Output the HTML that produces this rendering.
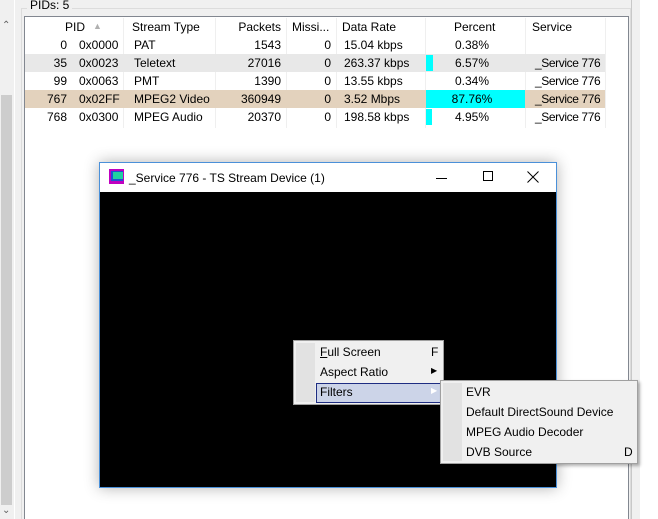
<!DOCTYPE html>
<html><head><style>
*{margin:0;padding:0;box-sizing:border-box}
body{width:658px;height:519px;background:#f0f0f0;font-family:"Liberation Sans",sans-serif;font-size:12px;color:#000;position:relative;overflow:hidden}
.a{position:absolute}
.row{position:absolute;left:25px;height:18px;width:580px}
.c{position:absolute;top:2px;white-space:nowrap}
.r{text-align:right}
.s{letter-spacing:-0.4px}
</style></head><body>
<div class="a" style="left:0;top:0;width:14px;height:519px;background:#f0f0f0"></div>
<div class="a" style="left:1px;top:95px;width:11px;height:410px;background:#cdcdcd"></div>
<div class="a" style="left:2px;top:20px;font-size:10px;color:#606060">&#8963;</div>
<div class="a" style="left:2px;top:505px;font-size:10px;color:#606060">&#8964;</div>
<div class="a" style="left:14px;top:0;width:1px;height:519px;background:#fff"></div>
<div class="a" style="left:21px;top:8px;width:610px;height:511px;border:1px solid #dcdcdc;border-bottom:none"></div>
<div class="a" style="left:27px;top:0;background:#f0f0f0;padding:0 3px;font-size:12px;line-height:11px;color:#000">PIDs: 5</div>
<div class="a" style="left:24px;top:16px;width:605px;height:503px;background:#fff;border:1px solid #828790;border-bottom:none"></div>
<div class="a" style="left:640px;top:0;width:18px;height:519px;background:#fff"></div>
<div class="a" style="left:631px;top:0;width:1px;height:519px;background:#c8c8c8"></div>
<!-- header -->
<div class="row" style="top:18px">
<div class="c" style="left:40px">PID</div><div class="c" style="left:68px;top:3px;color:#b0b0b0;font-size:9px">&#9650;</div>
<div class="c" style="left:107px">Stream Type</div>
<div class="c r" style="left:190px;width:66px">Packets</div>
<div class="c" style="left:267px">Missi...</div>
<div class="c" style="left:317px">Data Rate</div>
<div class="c" style="left:429px">Percent</div>
<div class="c" style="left:507px">Service</div>
</div>
<div class="a" style="left:123px;top:18px;width:1px;height:110px;background:#efefef"></div>
<div class="a" style="left:215px;top:18px;width:1px;height:110px;background:#efefef"></div>
<div class="a" style="left:286px;top:18px;width:1px;height:110px;background:#efefef"></div>
<div class="a" style="left:336px;top:18px;width:1px;height:110px;background:#efefef"></div>
<div class="a" style="left:425px;top:18px;width:1px;height:110px;background:#efefef"></div>
<div class="a" style="left:525px;top:18px;width:1px;height:110px;background:#efefef"></div>
<div class="a" style="left:605px;top:18px;width:1px;height:110px;background:#efefef"></div>

<div class="row" style="top:36px"><div class="c r" style="left:0;width:42px">0</div><div class="c" style="left:54px">0x0000</div><div class="c" style="left:109px">PAT</div><div class="c r" style="left:190px;width:66px">1543</div><div class="c r" style="left:270px;width:36px">0</div><div class="c" style="left:319px">15.04 kbps</div><div class="c" style="left:407px;width:80px;text-align:center">0.38%</div></div>
<div class="row" style="top:54px;background:#e8e8e8"><div class="a" style="left:401px;top:1px;width:7px;height:16px;background:#00ffff"></div><div class="c r" style="left:0;width:42px">35</div><div class="c" style="left:54px">0x0023</div><div class="c" style="left:109px">Teletext</div><div class="c r" style="left:190px;width:66px">27016</div><div class="c r" style="left:270px;width:36px">0</div><div class="c" style="left:319px">263.37 kbps</div><div class="c" style="left:407px;width:80px;text-align:center">6.57%</div><div class="c s" style="left:510px">_Service 776</div></div>
<div class="row" style="top:72px"><div class="c r" style="left:0;width:42px">99</div><div class="c" style="left:54px">0x0063</div><div class="c" style="left:109px">PMT</div><div class="c r" style="left:190px;width:66px">1390</div><div class="c r" style="left:270px;width:36px">0</div><div class="c" style="left:319px">13.55 kbps</div><div class="c" style="left:407px;width:80px;text-align:center">0.34%</div><div class="c s" style="left:510px">_Service 776</div></div>
<div class="row" style="top:90px;background:#e3d2bd"><div class="a" style="left:401px;top:0;width:99px;height:18px;background:#00ffff"></div><div class="c r" style="left:0;width:42px">767</div><div class="c" style="left:54px">0x02FF</div><div class="c" style="left:109px">MPEG2 Video</div><div class="c r" style="left:190px;width:66px">360949</div><div class="c r" style="left:270px;width:36px">0</div><div class="c" style="left:319px">3.52 Mbps</div><div class="c" style="left:407px;width:80px;text-align:center">87.76%</div><div class="c s" style="left:510px">_Service 776</div></div>
<div class="row" style="top:108px"><div class="a" style="left:401px;top:1px;width:6px;height:16px;background:#00ffff"></div><div class="c r" style="left:0;width:42px">768</div><div class="c" style="left:54px">0x0300</div><div class="c" style="left:109px">MPEG Audio</div><div class="c r" style="left:190px;width:66px">20370</div><div class="c r" style="left:270px;width:36px">0</div><div class="c" style="left:319px">198.58 kbps</div><div class="c" style="left:407px;width:80px;text-align:center">4.95%</div><div class="c s" style="left:510px">_Service 776</div></div>

<!-- window -->
<div class="a" style="left:99px;top:162px;width:458px;height:326px;border:1px solid #4a90d9;background:#000;box-shadow:0 0 14px rgba(0,0,0,.3)">
<div class="a" style="left:0;top:0;width:456px;height:29px;background:#fff">
<div class="a" style="left:9px;top:6px;width:15px;height:15px;background:#c000c0"><div class="a" style="left:2px;top:2px;width:12px;height:10px;background:#2050d0"></div><div class="a" style="left:4px;top:3px;width:10px;height:7px;background:#20d0a0"></div></div>
<div class="a" style="left:29px;top:8px;font-size:12px">_Service 776 - TS Stream Device (1)</div>
<div class="a" style="left:336px;top:15px;width:11px;height:1px;background:#000"></div>
<div class="a" style="left:383px;top:8px;width:10px;height:10px;border:1px solid #000"></div>
<svg class="a" style="left:427px;top:8px" width="12" height="12"><path d="M0.5 0.5L11.5 11.5M11.5 0.5L0.5 11.5" stroke="#000" stroke-width="1"/></svg>
</div>
</div>

<!-- menu 1 -->
<div class="a" style="left:293px;top:340px;width:151px;height:65px;background:#f0f0f0;border:1px solid #a0a0a0;box-shadow:2px 2px 3px rgba(0,0,0,.3)">
<div class="a" style="left:2px;top:2px;width:19px;height:59px;background:#e2e2e2"></div>
<div class="a" style="left:22px;top:42px;width:126px;height:20px;background:#ccd4e8;border:1px solid #1e2d82"></div>
<div class="a" style="left:26px;top:4px"><u>F</u>ull Screen</div>
<div class="a" style="left:137px;top:4px">F</div>
<div class="a" style="left:26px;top:24px">Aspect Ratio</div>
<div class="a" style="left:137px;top:25px;font-size:8px">&#9654;</div>
<div class="a" style="left:26px;top:44px">Filters</div>
<div class="a" style="left:137px;top:45px;font-size:8px;color:#fff">&#9654;</div>
</div>
<!-- menu 2 -->
<div class="a" style="left:440px;top:380px;width:198px;height:84px;background:#f0f0f0;border:1px solid #a0a0a0;box-shadow:2px 2px 3px rgba(0,0,0,.3)">
<div class="a" style="left:2px;top:2px;width:19px;height:78px;background:#e2e2e2"></div>
<div class="a" style="left:25px;top:4px">EVR</div>
<div class="a" style="left:25px;top:24px">Default DirectSound Device</div>
<div class="a" style="left:25px;top:44px">MPEG Audio Decoder</div>
<div class="a" style="left:25px;top:64px">DVB Source</div>
<div class="a" style="left:183px;top:64px">D</div>
</div>
</body></html>
